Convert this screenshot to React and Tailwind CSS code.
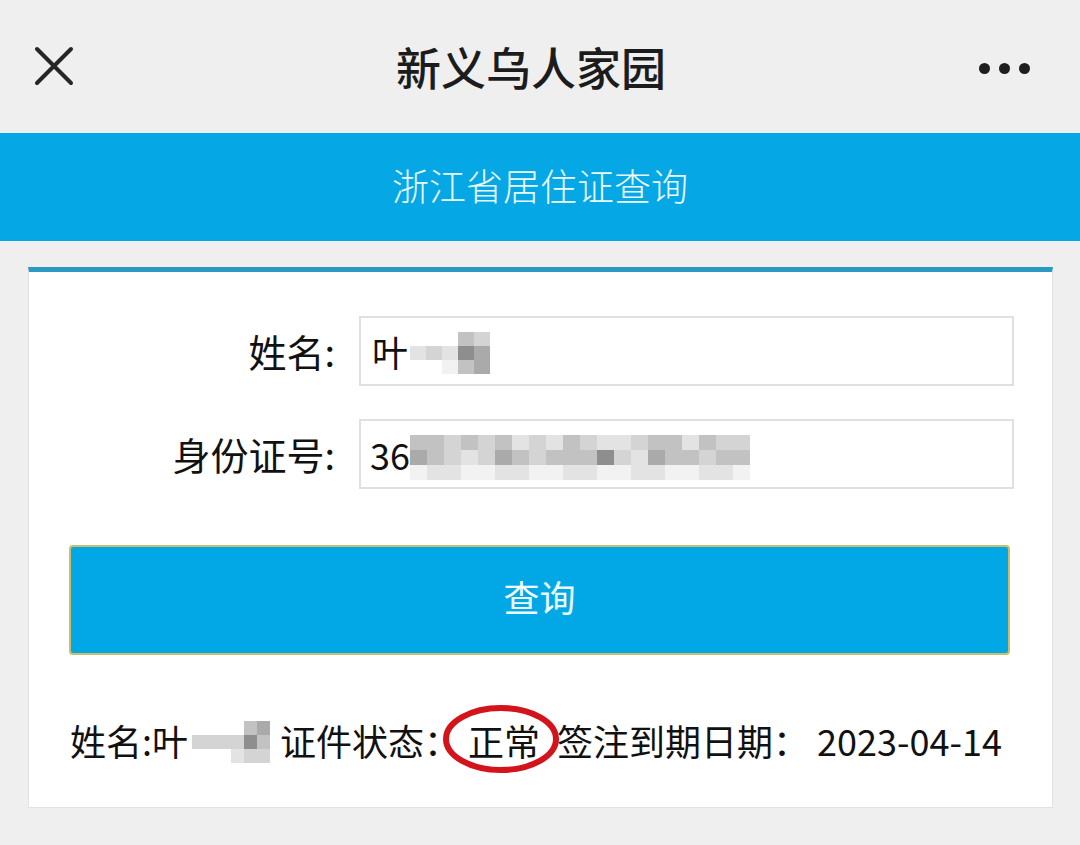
import React from 'react';

const shades = {
    a: 'bg-[#f2f2f2]',
    b: 'bg-[#e3e3e3]',
    c: 'bg-[#d4d4d4]',
    d: 'bg-[#c2c2c2]',
    e: 'bg-[#aaaaaa]',
    f: 'bg-[#8e8e8e]',
    w: 'bg-transparent',
};

// pixelated blur, one string per row, one letter per cell
function Mosaic({ rows, cell = 'w-[11px] h-[11px]', className = '' }) {
    return (
        <span className={`inline-flex flex-col align-middle ${className}`}>
            {rows.map((row, i) => (
                <span key={i} className="flex">
                    {row.split('').map((k, j) => (
                        <span key={j} className={`${cell} ${shades[k]}`} />
                    ))}
                </span>
            ))}
        </span>
    );
}

export default function App() {
    return (
        <div className="w-[1080px] h-[845px] bg-[#efefef] overflow-hidden font-['Noto_Sans_CJK_SC','Noto_Sans',sans-serif] text-[#111]">
            {/* top bar */}
            <div className="h-[133px] flex items-center justify-between pl-[33px] pr-[50px]">
                <svg width="42" height="42" viewBox="0 0 42 42" className="mt-[-2px]">
                    <path d="M4 4 L38 38 M38 4 L4 38" stroke="#262626" strokeWidth="4" strokeLinecap="round" />
                </svg>
                <h1 className="text-[45px] font-medium leading-none text-[#1c1c1c] ml-[8px]">新义乌人家园</h1>
                <div className="flex items-center gap-[9px] mt-[4px]">
                    <span className="w-[11px] h-[11px] rounded-full bg-[#1e1e1e]" />
                    <span className="w-[11px] h-[11px] rounded-full bg-[#1e1e1e]" />
                    <span className="w-[11px] h-[11px] rounded-full bg-[#1e1e1e]" />
                </div>
            </div>

            {/* blue title band */}
            <div className="h-[108px] bg-[#05a7e5] flex items-center justify-center">
                <span className="text-[37px] leading-none text-[#e9fbff] font-light mt-[-4px]">浙江省居住证查询</span>
            </div>

            <div className="pt-[26px] pl-[28px] pr-[27px]">
                <div className="h-[541px] bg-white border-t-[5px] border-t-[#2a9ac2] border-x border-b border-x-[#e2e2e2] border-b-[#e2e2e2]">
                    <div className="flex items-center mt-[44px]">
                        <label className="w-[306px] text-right text-[38px] leading-none">姓名:</label>
                        <div className="ml-[24px] w-[655px] h-[70px] border-2 border-[#e0e0e0] flex items-center pl-[11px] text-[36px] leading-none">
                            <span>叶</span>
                            <Mosaic
                                className="ml-[2px] mt-[4px]"
                                rows={['wwwdc', 'bcbfe', 'wwade']}
                                cell="w-[16px] h-[14px]"
                            />
                        </div>
                    </div>
                    <div className="flex items-center mt-[33px]">
                        <label className="w-[306px] text-right text-[38px] leading-none">身份证号:</label>
                        <div className="ml-[24px] w-[655px] h-[70px] border-2 border-[#e0e0e0] flex items-center pl-[9px] text-[36px] leading-none">
                            <span>36</span>
                            <Mosaic
                                className="mt-[6px]"
                                rows={[
                                    'ddcdcdbcbdcbbcddbdcc',
                                    'edcbcedcdddfcbeddcdd',
                                    'abbaabbaabbaabbaabba',
                                ]}
                                cell="w-[17px] h-[15px]"
                            />
                        </div>
                    </div>

                    <button className="ml-[40px] mt-[56px] w-[941px] h-[110px] bg-[#02a8e6] border-2 border-[#c9bf6a] rounded-[4px] text-[36px] text-[#eefcff] leading-none pb-[8px]">
                        查询
                    </button>

                    <div className="mt-[60px] pl-[41px] h-[50px] flex items-center text-[36px] leading-none whitespace-nowrap">
                        <span>姓名:叶</span>
                        <Mosaic
                            className="ml-[4px] mr-[10px] mt-[4px]"
                            rows={['wwwwde', 'ccccfd', 'wwwbcc']}
                            cell="w-[13px] h-[14px]"
                        />
                        <span>证件状态：</span>
                        <span className="relative ml-[8px]">
                            正常
                            <svg
                                width="120"
                                height="72"
                                viewBox="0 0 120 72"
                                className="absolute left-[-27px] top-[-19px] pointer-events-none"
                            >
                                <ellipse cx="60" cy="36" rx="55" ry="31" fill="none" stroke="#d3141b" strokeWidth="6" />
                            </svg>
                        </span>
                        <span className="ml-[17px]">签注到期日期：</span>
                        <span className="ml-[8px]">2023-04-14</span>
                    </div>
                </div>
            </div>
        </div>
    );
}
